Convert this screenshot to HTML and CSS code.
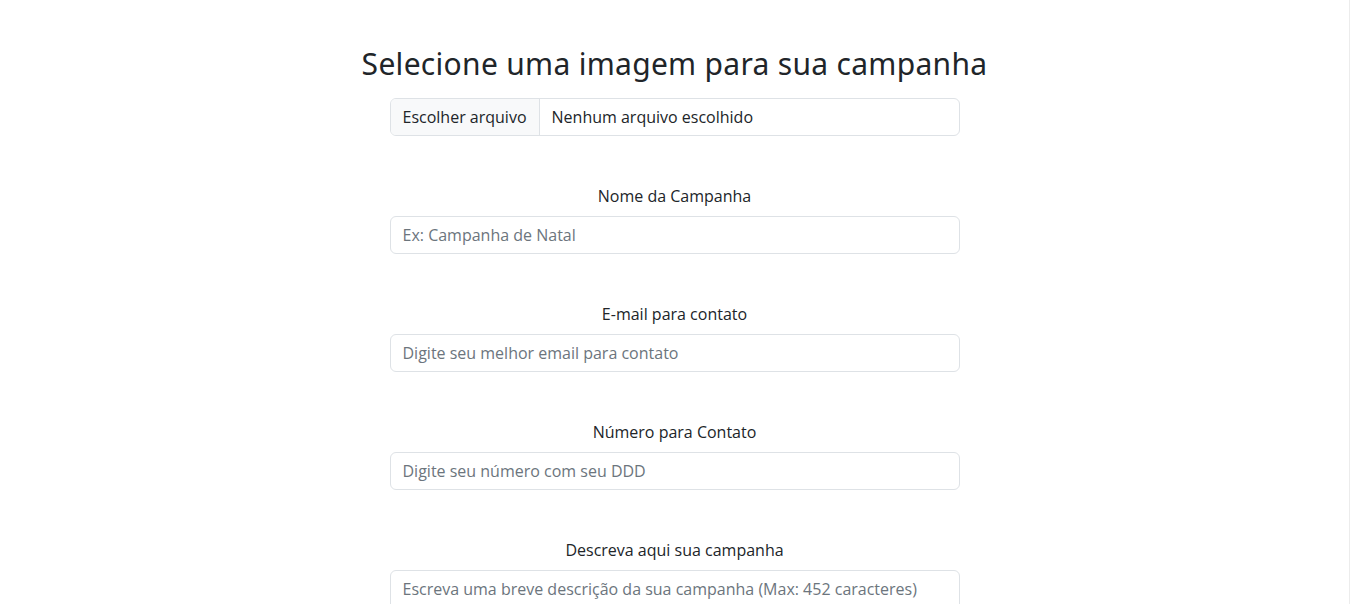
FILE: index.html
```html
<!DOCTYPE html>
<html lang="pt-BR">
<head>
<meta charset="utf-8">
<title>Nova campanha</title>
<link rel="stylesheet" href="styles.css">
</head>
<body>
<div class="page">
  <form class="form">
    <h1 class="title">Selecione uma imagem para sua campanha</h1>
    <div class="file-input">
      <span class="file-btn">Escolher arquivo</span>
      <span class="file-name">Nenhum arquivo escolhido</span>
    </div>

    <div class="field">
      <label class="label">Nome da Campanha</label>
      <div class="control placeholder">Ex: Campanha de Natal</div>
    </div>

    <div class="field">
      <label class="label">E-mail para contato</label>
      <div class="control placeholder">Digite seu melhor email para contato</div>
    </div>

    <div class="field">
      <label class="label">Número para Contato</label>
      <div class="control placeholder">Digite seu número com seu DDD</div>
    </div>

    <div class="field">
      <label class="label">Descreva aqui sua campanha</label>
      <div class="control textarea placeholder">Escreva uma breve descrição da sua campanha (Max: 452 caracteres)</div>
    </div>
  </form>
</div>
</body>
</html>
```

FILE: styles.css
```css
html, body {
  margin: 0;
  padding: 0;
  background: #fff;
}
body {
  font-family: "Open Sans", "Liberation Sans", sans-serif;
  font-size: 16px;
  line-height: 24px;
  color: #212529;
  overflow: hidden;
}
.page {
  width: 1349px;
  height: 604px;
  border-right: 1px solid #ececec;
  display: flex;
  justify-content: center;
  overflow: hidden;
}
.form {
  width: 570px;
  display: flex;
  flex-direction: column;
  padding-top: 44px;
}
.form > * {
  flex-shrink: 0;
}
.title {
  font-family: "Noto Sans", "Open Sans", sans-serif;
  font-weight: 400;
  font-size: 30px;
  line-height: 40px;
  margin: 0 -60px 14px;
  text-align: center;
  color: #212529;
  letter-spacing: 0.3px;
}
.file-input {
  display: flex;
  height: 38px;
  box-sizing: border-box;
  border: 1px solid #dee2e6;
  border-radius: 6px;
  overflow: hidden;
}
.file-btn {
  background: #f8f9fa;
  border-right: 1px solid #dee2e6;
  padding: 6px 12px;
}
.file-name {
  padding: 6px 12px;
}
.field {
  display: flex;
  flex-direction: column;
  margin-top: 48px;
}
.label {
  text-align: center;
  margin-bottom: 8px;
}
.control {
  flex-shrink: 0;
  height: 38px;
  box-sizing: border-box;
  border: 1px solid #dee2e6;
  border-radius: 6px;
  padding: 6px 12px;
}
.textarea {
  height: 80px;
}
.placeholder {
  color: #6c757d;
}
```
